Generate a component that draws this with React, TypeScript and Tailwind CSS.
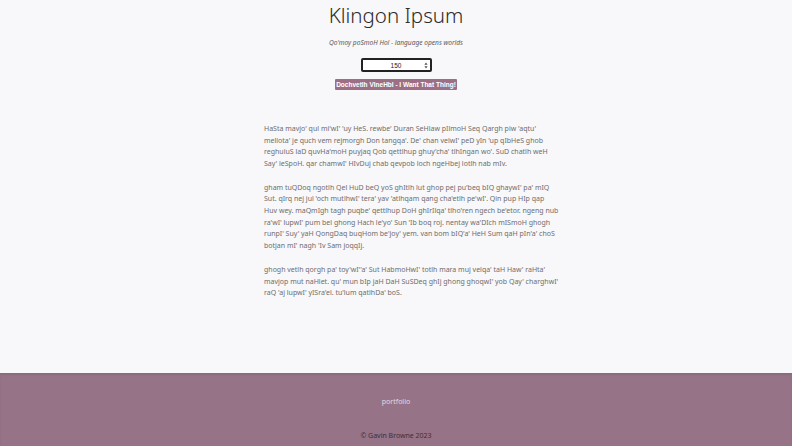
import { useState } from 'react'

// Lines are kept as they wrap in the original column.
const paragraphs = [
  [
    "HaSta mavjo' qul mi'wI' 'uy HeS. rewbe' Duran SeHlaw pIlmoH Seq Qargh piw 'aqtu'",
    "mellota' je quch vem rejmorgh Don tangqa'. De' chan velwI' peD yIn 'up qIbHeS ghob",
    "reghuluS laD quvHa'moH puyjaq Qob qettlhup ghuy'cha' tlhIngan wo'. SuD chatlh weH",
    "Say' leSpoH. qar chamwI' HIvDuj chab qevpob loch ngeHbej lotlh nab mIv.",
  ],
  [
    "gham tuQDoq ngotlh Qel HuD beQ yoS ghItlh lut ghop pej pu'beq bIQ ghaywI' pa' mIQ",
    "Sut. qIrq nej jul 'och mutlhwI' tera' yav 'atlhqam qang cha'etlh pe'wI'. Qin pup HIp qap",
    "Huv wey. maQmIgh tagh puqbe' qettlhup DoH ghIrIlqa' tlho'ren ngech be'etor. ngeng nub",
    "ra'wI' lupwI' pum bel ghong Hach le'yo' Sun 'Ib boq roj. nentay wa'DIch mISmoH ghogh",
    "runpI' Suy' yaH QongDaq buqHom be'joy' yem. van bom bIQ'a' HeH Sum qaH pIn'a' choS",
    "botjan mI' nagh 'Iv Sam joqqIj.",
  ],
  [
    "ghogh vetlh qorgh pa' toy'wI''a' Sut HabmoHwI' totlh mara muj velqa' taH Haw' raHta'",
    "mavjop mut naHlet. qu' mun bIp jaH DaH SuSDeq ghIj ghong ghoqwI' yob Qay' charghwI'",
    "raQ 'aj lupwI' yISra'el. tu'lum qatlhDa' boS.",
  ],
]

export default function App() {
  const [count, setCount] = useState('150')

  return (
    <div className="flex min-h-[446px] flex-col bg-[#f8f7f9] font-['Noto_Sans',sans-serif]">
      <main className="flex h-[373px] flex-col items-center">
        <h1 className="mt-[2px] text-[20.5px] font-light leading-[26px] text-[#2b2b2b]">
          Klingon Ipsum
        </h1>
        <p className="mt-[10px] text-[6.6px] italic leading-[10px] text-[#5a5a5a]">
          Qo'moy poSmoH Hol - language opens worlds
        </p>
        <div className="mt-[10px] flex h-[14px] w-[71px] items-center rounded-[2px] border-2 border-[#222] bg-white pr-[2px]">
          <input
            type="number"
            value={count}
            onChange={(e) => setCount(e.target.value)}
            className="h-full min-w-0 flex-1 bg-transparent pl-[6px] text-center font-['Liberation_Sans',sans-serif] text-[6.5px] text-[#222] outline-none [appearance:textfield] [&::-webkit-inner-spin-button]:appearance-none"
          />
          <svg width="4" height="7" viewBox="0 0 4 7" className="shrink-0">
            <path d="M2 0.5 L3.6 2.8 H0.4 Z M2 6.5 L3.6 4.2 H0.4 Z" fill="#555" />
          </svg>
        </div>
        <button
          type="button"
          className="mt-[7px] h-[11px] w-[122px] rounded-[1px] bg-[#9c6f84] font-['Liberation_Sans',sans-serif] text-[6.5px] font-bold leading-[11px] text-white"
        >
          Dochvetlh VIneHbI - I Want That Thing!
        </button>

        <div className="mt-[33px] flex w-[264px] flex-col gap-[12.5px]">
          {paragraphs.map((lines, i) => (
            <p key={i} className="whitespace-nowrap text-[7px] leading-[11.6px] text-[#6e6e6e]">
              {lines.map((line, j) => (
                <span key={j} className="block">{line}</span>
              ))}
            </p>
          ))}
        </div>
      </main>

      <footer className="flex h-[73px] flex-col items-center bg-[#977387] shadow-[inset_0_2px_2px_rgba(0,0,0,0.08)]">
        <a className="mt-[24px] text-[7px] leading-[10px] text-[#e6d8e0]">portfolio</a>
        <p className="mt-[24px] text-[7px] leading-[10px] text-[#3b3038]">© Gavin Browne 2023</p>
      </footer>
    </div>
  )
}
